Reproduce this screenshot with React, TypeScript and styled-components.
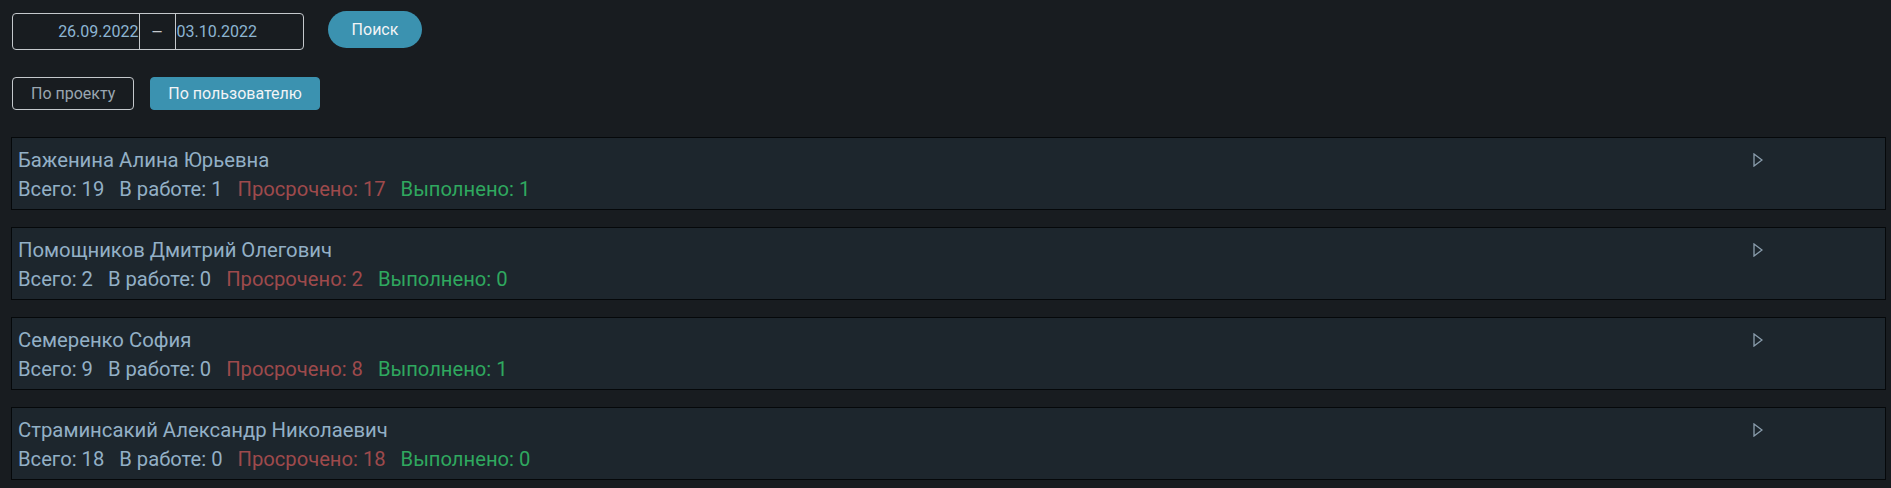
import React from "react";
import styled, { createGlobalStyle } from "styled-components";

const Global = createGlobalStyle`
  html, body { margin: 0; padding: 0; background: #181c20; }
  body { font-family: Roboto, "Noto Sans", "Liberation Sans", sans-serif; }
  * { box-sizing: border-box; }
`;

const Page = styled.div`
  padding: 11px 5px 0 11px;
`;

const TopBar = styled.div`
  display: flex;
  align-items: flex-start;
  gap: 24px;
  padding-left: 1px;
`;

const DateRange = styled.div`
  display: flex;
  margin-top: 2px;
  width: 292px;
  height: 37px;
  border: 1px solid #c4c8cc;
  border-radius: 4px;
  overflow: hidden;
`;

const DateField = styled.div<{ $align: "left" | "right" }>`
  flex: 1;
  display: flex;
  align-items: center;
  justify-content: ${(p) => (p.$align === "right" ? "flex-end" : "flex-start")};
  padding: 0 ${(p) => (p.$align === "right" ? "0" : "1px")};
  color: #8db5d3;
  font-size: 16px;
`;

const Dash = styled.div`
  width: 37px;
  display: flex;
  align-items: center;
  justify-content: center;
  border-left: 1px solid #c4c8cc;
  border-right: 1px solid #c4c8cc;
  color: #c4c8cc;
  font-size: 14px;
`;

const SearchButton = styled.button`
  width: 94px;
  height: 37px;
  border: none;
  border-radius: 19px;
  background: #3b92b0;
  color: #f2f4f6;
  font-family: inherit;
  font-size: 16px;
  font-weight: 400;
  cursor: pointer;
`;

const Toggles = styled.div`
  display: flex;
  gap: 16px;
  margin-top: 27px;
  padding-left: 1px;
`;

const Toggle = styled.button<{ $active?: boolean }>`
  height: 33px;
  padding: 0 ${(p) => (p.$active ? "17px" : "18px")};
  border-radius: 4px;
  border: 1px solid ${(p) => (p.$active ? "#3b92b0" : "#c4c8cc")};
  background: ${(p) => (p.$active ? "#3b92b0" : "transparent")};
  color: ${(p) => (p.$active ? "#f2f4f6" : "#9aa6b0")};
  font-family: inherit;
  font-size: 16px;
  font-weight: 400;
  cursor: pointer;
`;

const List = styled.div`
  display: flex;
  flex-direction: column;
  gap: 17px;
  margin-top: 27px;
`;

const Card = styled.div`
  height: 73px;
  border: 1px solid #05080a;
  background: #1d262d;
  padding: 8px 0 0 6px;
`;

const Header = styled.div`
  display: flex;
  align-items: center;
  height: 28px;
`;

const Name = styled.div`
  flex: 1;
  color: #93b0c6;
  font-size: 20.3px;
`;

const Expand = styled.div`
  width: 10px;
  height: 14px;
  margin-right: 122px;
  display: flex;
`;

const Stats = styled.div`
  display: flex;
  gap: 15px;
  height: 30px;
  align-items: center;
  font-size: 20.2px;
`;

const Stat = styled.span<{ $tone: "base" | "bad" | "good" }>`
  color: ${(p) =>
    p.$tone === "bad" ? "#9e4a4c" : p.$tone === "good" ? "#2fa85f" : "#93b0c6"};
`;

const users = [
  { name: "Баженина Алина Юрьевна", total: 19, work: 1, late: 17, done: 1 },
  { name: "Помощников Дмитрий Олегович", total: 2, work: 0, late: 2, done: 0 },
  { name: "Семеренко София", total: 9, work: 0, late: 8, done: 1 },
  { name: "Страминсакий Александр Николаевич", total: 18, work: 0, late: 18, done: 0 },
];

const PlayIcon = () => (
  <svg width="10" height="14" viewBox="0 0 10 14" fill="none">
    <path d="M1 1 L9 7 L1 13 Z" stroke="#8b9eae" strokeWidth="1.3" strokeLinejoin="miter" />
  </svg>
);

export default function App() {
  return (
    <>
      <Global />
      <Page>
        <TopBar>
          <DateRange>
            <DateField $align="right">26.09.2022</DateField>
            <Dash>—</Dash>
            <DateField $align="left">03.10.2022</DateField>
          </DateRange>
          <SearchButton>Поиск</SearchButton>
        </TopBar>
        <Toggles>
          <Toggle>По проекту</Toggle>
          <Toggle $active>По пользователю</Toggle>
        </Toggles>
        <List>
          {users.map((u) => (
            <Card key={u.name}>
              <Header>
                <Name>{u.name}</Name>
                <Expand>
                  <PlayIcon />
                </Expand>
              </Header>
              <Stats>
                <Stat $tone="base">Всего: {u.total}</Stat>
                <Stat $tone="base">В работе: {u.work}</Stat>
                <Stat $tone="bad">Просрочено: {u.late}</Stat>
                <Stat $tone="good">Выполнено: {u.done}</Stat>
              </Stats>
            </Card>
          ))}
        </List>
      </Page>
    </>
  );
}
